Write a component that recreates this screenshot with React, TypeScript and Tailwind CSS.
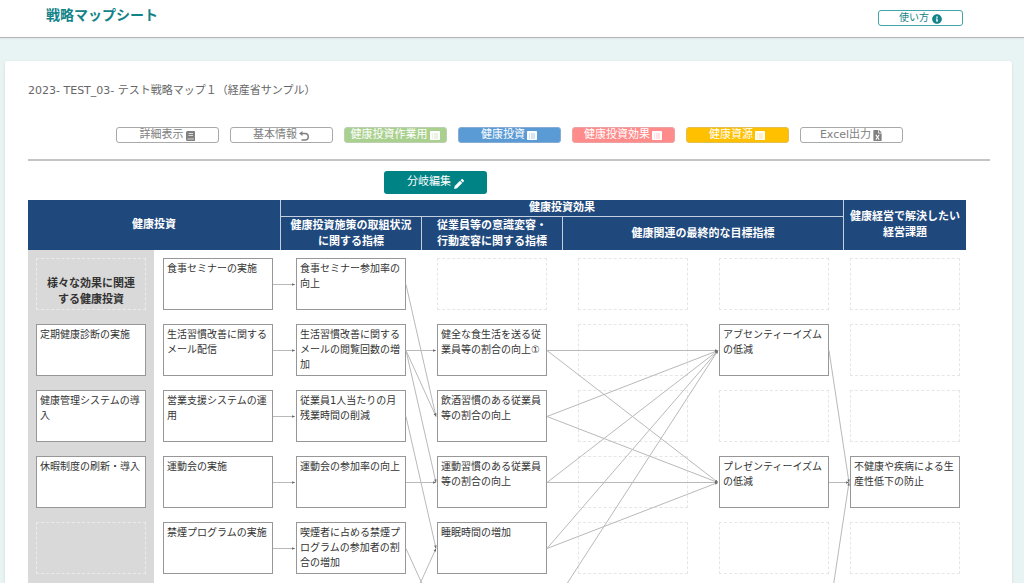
import type { ReactNode } from 'react';
import { FaFileExcel, FaInfoCircle } from 'react-icons/fa';

// text: filled box, '': filled box without a label yet, null: free slot
type Slot = string | null;

const rows: Slot[][] = [
  [null, '食事セミナーの実施', '食事セミナー参加率の向上', null, null, null, null],
  [
    '定期健康診断の実施',
    '生活習慣改善に関するメール配信',
    '生活習慣改善に関するメールの閲覧回数の増加',
    '健全な食生活を送る従業員等の割合の向上①',
    null,
    'アブセンティーイズムの低減',
    null,
  ],
  [
    '健康管理システムの導入',
    '営業支援システムの運用',
    '従業員1人当たりの月残業時間の削減',
    '飲酒習慣のある従業員等の割合の向上',
    null,
    null,
    null,
  ],
  [
    '休暇制度の刷新・導入',
    '運動会の実施',
    '運動会の参加率の向上',
    '運動習慣のある従業員等の割合の向上',
    null,
    'プレゼンティーイズムの低減',
    '不健康や疾病による生産性低下の防止',
  ],
  [
    null,
    '禁煙プログラムの実施',
    '喫煙者に占める禁煙プログラムの参加者の割合の増加',
    '睡眠時間の増加',
    null,
    null,
    null,
  ],
  [null, '', '', '', null, '', null],
];

const cellPadding = ['pl-2', 'pl-[9px]', 'pl-[15px]', 'pl-[15px]', 'pl-[15px]', 'pl-[15px]', 'pl-[6px]'];

// left edge of the boxes in each column, measured from the map's left side
const boxLeft = [8, 135, 268, 409, 550, 691, 822];
const BOX_WIDTH = 110;
const ROW_HEIGHT = 66;
const FIRST_CENTER = 84;

// [from column, from row, to column, to row]
const links = [
  [1, 0, 2, 0],
  [1, 1, 2, 1],
  [1, 2, 2, 2],
  [1, 3, 2, 3],
  [1, 4, 2, 4],
  [1, 5, 2, 5],
  [2, 0, 3, 2],
  [2, 1, 3, 1],
  [2, 1, 3, 2],
  [2, 1, 3, 3],
  [2, 2, 3, 4],
  [2, 3, 3, 3],
  [2, 4, 3, 5],
  [2, 5, 3, 4],
  [3, 1, 5, 1],
  [3, 1, 5, 3],
  [3, 2, 5, 1],
  [3, 2, 5, 3],
  [3, 3, 5, 1],
  [3, 3, 5, 3],
  [3, 4, 5, 1],
  [3, 4, 5, 3],
  [3, 5, 5, 1],
  [5, 1, 6, 3],
  [5, 3, 6, 3],
  [5, 5, 6, 3],
];

function BookIcon() {
  return (
    <svg viewBox="0 0 18 20" className="h-[10px] w-[9px]" aria-hidden="true">
      <path d="M3 0h13a2 2 0 0 1 2 2v17a1 1 0 0 1-1 1H3a3 3 0 0 1-3-3V3a3 3 0 0 1 3-3Z" fill="currentColor" />
      <path d="M5 5h9M5 9h9M3 16h13" stroke="#fff" strokeWidth="1.4" />
    </svg>
  );
}

function ReturnIcon() {
  return (
    <svg viewBox="0 0 20 20" className="h-[10px] w-[10px]" fill="none" aria-hidden="true">
      <path d="M5 5h7a6 6 0 0 1 0 13H5" stroke="currentColor" strokeWidth="3" />
      <path d="M0 5 7 0v10Z" fill="currentColor" />
    </svg>
  );
}

function ListIcon() {
  return (
    <svg viewBox="0 0 20 18" className="h-[9px] w-[10px]" aria-hidden="true">
      <rect width="20" height="18" rx="1.5" fill="#fff" />
      <path d="M4 6h2M8 6h8M4 10h2M8 10h8M4 14h2M8 14h8" stroke="currentColor" strokeWidth="1.6" opacity="0.6" />
    </svg>
  );
}

function PencilIcon() {
  return (
    <svg viewBox="0 0 20 20" className="h-[10px] w-[10px]" fill="currentColor" aria-hidden="true">
      <path d="M0 20 1.500 14 12 3.500l4.500 4.500L6 18.500Z" />
      <path d="m13.200 2.300 1.600-1.600a2 2 0 0 1 2.800 0l1.700 1.700a2 2 0 0 1 0 2.800l-1.600 1.600Z" />
    </svg>
  );
}

type ToolButtonProps = {
  label: string;
  className: string;
  icon: ReactNode;
};

function ToolButton({ label, className, icon }: ToolButtonProps) {
  return (
    <button
      type="button"
      className={`flex h-4 w-[103px] items-center justify-center gap-[2px] rounded-[3px] border pb-[2px] text-[11px] leading-none whitespace-nowrap ${className}`}
    >
      {label}
      <span className="mt-[3px]">{icon}</span>
    </button>
  );
}

function Toolbar() {
  const plain = 'border-[#a9a9a9] bg-white text-[#808080]';
  return (
    <div className="flex flex-wrap justify-center gap-[11px]">
      <ToolButton label="詳細表示" className={plain} icon={<BookIcon />} />
      <ToolButton label="基本情報" className={plain} icon={<ReturnIcon />} />
      <ToolButton
        label="健康投資作業用"
        className="border-[#bccfb0] bg-[#a9d08e] text-white"
        icon={<span className="text-[#a9d08e]"><ListIcon /></span>}
      />
      <ToolButton
        label="健康投資"
        className="border-[#86acd2] bg-[#5b9bd5] text-white"
        icon={<span className="text-[#5b9bd5]"><ListIcon /></span>}
      />
      <ToolButton
        label="健康投資効果"
        className="border-[#eba2a2] bg-[#ff8b8b] text-white"
        icon={<span className="text-[#ff8b8b]"><ListIcon /></span>}
      />
      <ToolButton
        label="健康資源"
        className="border-[#e2bf56] bg-[#ffc000] text-white"
        icon={<span className="text-[#ffc000]"><ListIcon /></span>}
      />
      <ToolButton label="Excel出力" className={plain} icon={<FaFileExcel className="h-[11px] w-[9px]" />} />
    </div>
  );
}

function Box({ text, gray }: { text: Slot; gray: boolean }) {
  if (text === null) {
    return (
      <div
        className={`h-[52px] w-[110px] border border-dashed ${gray ? 'border-[#ebebeb]' : 'border-[#e6e6e6]'}`}
      />
    );
  }
  return (
    <div className="h-[52px] w-[110px] border border-[#979797] bg-white px-[3px] pt-[2px] text-[10px] leading-[15px] text-[#333]">
      {text}
    </div>
  );
}

function Connectors() {
  return (
    <svg className="pointer-events-none absolute top-0 left-0 h-full w-[938px]" aria-hidden="true">
      {links.map(([fromCol, fromRow, toCol, toRow]) => {
        const x1 = boxLeft[fromCol] + BOX_WIDTH;
        const y1 = FIRST_CENTER + fromRow * ROW_HEIGHT + 0.5;
        const x2 = boxLeft[toCol] - 1;
        const y2 = FIRST_CENTER + toRow * ROW_HEIGHT + 0.5;
        const angle = (Math.atan2(y2 - y1, x2 - x1) * 180) / Math.PI;
        return (
          <g key={`${fromCol}-${fromRow}-${toCol}-${toRow}`}>
            <line x1={x1} y1={y1} x2={x2} y2={y2} stroke="#b9b9b9" />
            <path d="M0 0-3-1.3v2.6Z" fill="#6b6b6b" transform={`translate(${x2} ${y2}) rotate(${angle})`} />
          </g>
        );
      })}
    </svg>
  );
}

function StrategyMap() {
  const line = 'border-[#c3cfdf]';
  return (
    <div className="overflow-x-auto">
      <div className="relative w-[938px]">
        <table className="w-full table-fixed border-separate border-spacing-0">
          <colgroup>
            <col className="w-[126px]" />
            <col className="w-[127px]" />
            <col className="w-[141px]" />
            <col className="w-[141px]" />
            <col className="w-[141px]" />
            <col className="w-[140px]" />
            <col className="w-[122px]" />
          </colgroup>
          <thead className="bg-[#1f497d] text-[11px] leading-4 font-bold text-white">
            <tr className="h-[17px]">
              <th colSpan={2} rowSpan={2} className={`border-r p-0 ${line}`}>
                健康投資
              </th>
              <th colSpan={4} className={`border-r border-b p-0 ${line}`}>
                健康投資効果
              </th>
              <th rowSpan={2} className="p-0">
                健康経営で解決したい
                <br />
                経営課題
              </th>
            </tr>
            <tr className="h-[33px]">
              <th className={`border-r p-0 ${line}`}>
                健康投資施策の取組状況
                <br />
                に関する指標
              </th>
              <th className={`border-r p-0 ${line}`}>
                従業員等の意識変容・
                <br />
                行動変容に関する指標
              </th>
              <th colSpan={2} className={`border-r p-0 ${line}`}>
                健康関連の最終的な目標指標
              </th>
            </tr>
          </thead>
          <tbody>
            {rows.map((row, r) => (
              <tr key={r} className="h-[66px]">
                {row.map((text, c) => (
                  <td key={c} className={`p-0 pt-2 align-top ${cellPadding[c]} ${c === 0 ? 'bg-[#d9d9d9]' : ''}`}>
                    {r === 0 && c === 0 ? (
                      <div className="h-[52px] w-[110px] border border-dashed border-[#ebebeb] pt-[17px] text-center text-[11px] leading-4 font-bold text-[#333]">
                        様々な効果に関連
                        <br />
                        する健康投資
                      </div>
                    ) : (
                      <Box text={text} gray={c === 0} />
                    )}
                  </td>
                ))}
              </tr>
            ))}
          </tbody>
        </table>
        <Connectors />
      </div>
    </div>
  );
}

function App() {
  return (
    <div className="min-h-screen bg-[#e8f3f4] font-['DejaVu_Sans','Noto_Sans_CJK_JP',sans-serif] text-[#333]">
      <header className="flex h-[38px] items-start justify-between border-b border-[#b5b5b5] bg-white pr-[61px] pl-[46px] shadow-xs">
        <h1 className="pt-[5px] text-[14px] leading-5 font-bold text-[#128388]">戦略マップシート</h1>
        <button
          type="button"
          className="mt-[10px] flex h-4 w-[85px] items-center justify-center gap-[3px] rounded-[3px] border border-[#3fa5a8] bg-white text-[10px] leading-none text-[#128388]"
        >
          使い方
          <FaInfoCircle className="mt-px h-[10px] w-[10px]" />
        </button>
      </header>

      <main className="mt-[23px] mr-3 ml-[5px] rounded-[3px] bg-white pt-5 pr-[22px] pb-6 pl-[23px] shadow-sm">
        <p className="text-[11px] leading-5 text-[#666]">2023- TEST_03- テスト戦略マップ１（経産省サンプル）</p>

        <div className="mt-[26px] border-b-2 border-[#c4c4c4] pb-4">
          <Toolbar />
        </div>

        <div className="flex max-w-[815px] justify-center pt-[10px] pb-[6px]">
          <button
            type="button"
            className="flex h-[23px] w-[103px] items-center justify-center gap-[3px] rounded-[3px] bg-[#008385] pb-[2px] text-[11px] leading-none text-white"
          >
            分岐編集
            <span className="mt-[5px]">
              <PencilIcon />
            </span>
          </button>
        </div>

        <StrategyMap />
      </main>
    </div>
  );
}

export default App;
